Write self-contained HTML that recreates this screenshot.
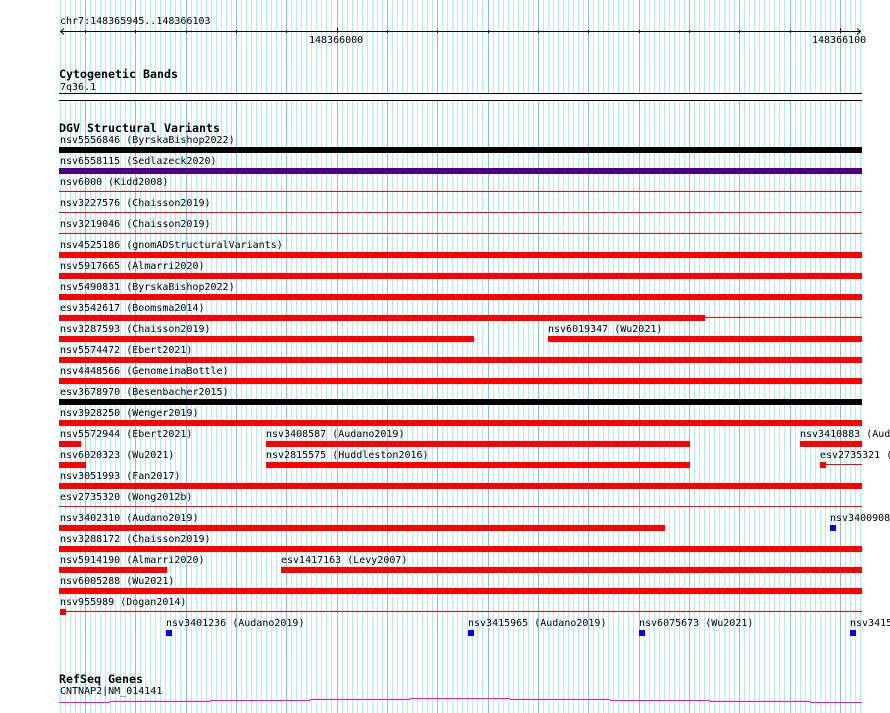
<!DOCTYPE html>
<html><head><meta charset="utf-8"><style>
html,body{margin:0;padding:0;background:#fff;width:890px;height:713px;overflow:hidden}
body{position:relative}
svg{position:absolute;left:0;top:0}
.t{position:absolute;font:10px/12px "DejaVu Sans Mono","Liberation Mono",monospace;color:#000;white-space:pre;margin-top:1px}
.b{position:absolute;font:bold 11.63px/14px "DejaVu Sans Mono","Liberation Mono",monospace;color:#000;white-space:pre}
.c{overflow:hidden}
</style></head><body>
<svg width="890" height="713" shape-rendering="crispEdges">
<g transform="translate(.5 0)" fill="none">
<path stroke="#aeeeee" d="M60 0V713M65 0V713M70 0V713M75 0V713M80 0V713M90 0V713M95 0V713M100 0V713M105 0V713M110 0V713M115 0V713M120 0V713M125 0V713M130 0V713M140 0V713M145 0V713M150 0V713M155 0V713M160 0V713M165 0V713M170 0V713M175 0V713M180 0V713M191 0V713M196 0V713M201 0V713M206 0V713M211 0V713M216 0V713M221 0V713M226 0V713M231 0V713M241 0V713M246 0V713M251 0V713M256 0V713M261 0V713M266 0V713M271 0V713M276 0V713M281 0V713M291 0V713M296 0V713M301 0V713M306 0V713M311 0V713M316 0V713M321 0V713M326 0V713M331 0V713M342 0V713M347 0V713M352 0V713M357 0V713M362 0V713M367 0V713M372 0V713M377 0V713M382 0V713M392 0V713M397 0V713M402 0V713M407 0V713M412 0V713M417 0V713M422 0V713M427 0V713M432 0V713M442 0V713M447 0V713M452 0V713M457 0V713M462 0V713M467 0V713M472 0V713M477 0V713M482 0V713M493 0V713M498 0V713M503 0V713M508 0V713M513 0V713M518 0V713M523 0V713M528 0V713M533 0V713M543 0V713M548 0V713M553 0V713M558 0V713M563 0V713M568 0V713M573 0V713M578 0V713M583 0V713M593 0V713M598 0V713M603 0V713M608 0V713M613 0V713M618 0V713M623 0V713M628 0V713M633 0V713M644 0V713M649 0V713M654 0V713M659 0V713M664 0V713M669 0V713M674 0V713M679 0V713M684 0V713M694 0V713M699 0V713M704 0V713M709 0V713M714 0V713M719 0V713M724 0V713M729 0V713M734 0V713M744 0V713M749 0V713M754 0V713M759 0V713M764 0V713M769 0V713M774 0V713M779 0V713M784 0V713M795 0V713M800 0V713M805 0V713M810 0V713M815 0V713M820 0V713M825 0V713M830 0V713M835 0V713M845 0V713M850 0V713M855 0V713M860 0V713"/>
<path stroke="#82c0ee" d="M85 0V713M135 0V713M186 0V713M236 0V713M286 0V713M337 0V713M387 0V713M437 0V713M488 0V713M538 0V713M588 0V713M639 0V713M689 0V713M739 0V713M790 0V713M840 0V713"/>
</g>
<!-- ruler -->
<g fill="#000">
<rect x="60" y="31" width="801" height="1"/>
<rect x="85" y="30" width="1" height="3"/><rect x="135" y="30" width="1" height="3"/><rect x="186" y="30" width="1" height="3"/><rect x="236" y="30" width="1" height="3"/><rect x="286" y="30" width="1" height="3"/><rect x="387" y="30" width="1" height="3"/><rect x="437" y="30" width="1" height="3"/><rect x="488" y="30" width="1" height="3"/><rect x="538" y="30" width="1" height="3"/><rect x="588" y="30" width="1" height="3"/><rect x="639" y="30" width="1" height="3"/><rect x="689" y="30" width="1" height="3"/><rect x="739" y="30" width="1" height="3"/><rect x="790" y="30" width="1" height="3"/>
<rect x="337" y="28" width="1" height="5"/><rect x="840" y="28" width="1" height="5"/>
</g>
<path d="M64 28.5L60.5 31.5L64 34.5M857 28.5L860.5 31.5L857 34.5" fill="none" stroke="#000" shape-rendering="auto"/>
<!-- cytoband -->
<rect x="59" y="94" width="803" height="6" fill="#fff"/>
<rect x="59" y="93" width="803" height="1" fill="#000"/>
<rect x="59" y="100" width="803" height="1" fill="#000"/>
<!-- bars -->
<g fill="#f00">
<rect x="59" y="191" width="803" height="1"/>
<rect x="59" y="212" width="803" height="1"/>
<rect x="59" y="252" width="803" height="6"/>
<rect x="59" y="273" width="803" height="6"/>
<rect x="59" y="294" width="803" height="6"/>
<rect x="59" y="315" width="646" height="6"/><rect x="705" y="317" width="157" height="1"/>
<rect x="59" y="336" width="415" height="6"/><rect x="548" y="336" width="314" height="6"/>
<rect x="59" y="357" width="803" height="6"/>
<rect x="59" y="378" width="803" height="6"/>
<rect x="59" y="420" width="803" height="6"/>
<rect x="59" y="441" width="22" height="6"/><rect x="266" y="441" width="424" height="6"/><rect x="800" y="441" width="62" height="6"/>
<rect x="59" y="462" width="27" height="6"/><rect x="266" y="462" width="424" height="6"/><rect x="820" y="462" width="6" height="6"/><rect x="826" y="464" width="36" height="1"/>
<rect x="59" y="483" width="803" height="6"/>
<rect x="59" y="506" width="803" height="1"/>
<rect x="59" y="525" width="606" height="6"/>
<rect x="59" y="546" width="803" height="6"/>
<rect x="59" y="567" width="108" height="6"/><rect x="281" y="567" width="581" height="6"/>
<rect x="59" y="588" width="803" height="6"/>
<rect x="60" y="609" width="6" height="6"/><rect x="66" y="611" width="796" height="1"/>
</g>
<rect x="59" y="233" width="803" height="1" fill="#f00"/>
<rect x="59" y="147" width="803" height="6" fill="#000"/>
<rect x="59" y="168" width="803" height="6" fill="#4b0082"/>
<rect x="59" y="399" width="803" height="6" fill="#000"/>
<g fill="#00f">
<rect x="830" y="525" width="6" height="6"/>
<rect x="166" y="630" width="6" height="6"/>
<rect x="468" y="630" width="6" height="6"/>
<rect x="639" y="630" width="6" height="6"/>
<rect x="850" y="630" width="6" height="6"/>
</g>
<g fill="#f0f">
<rect x="59" y="702" width="51" height="1"/>
<rect x="110" y="701" width="100" height="1"/>
<rect x="210" y="700" width="100" height="1"/>
<rect x="310" y="699" width="100" height="1"/>
<rect x="410" y="698" width="100" height="1"/>
<rect x="510" y="699" width="100" height="1"/>
<rect x="610" y="700" width="100" height="1"/>
<rect x="710" y="701" width="100" height="1"/>
<rect x="810" y="702" width="52" height="1"/>
</g>
</svg>
<div class="t" style="left:60px;top:15px">chr7:148365945..148366103</div>
<div class="t" style="left:309px;top:34px">148366000</div>
<div class="t" style="left:812px;top:34px">148366100</div>
<div class="b" style="left:59px;top:67px">Cytogenetic Bands</div>
<div class="t" style="left:60px;top:81px">7q36.1</div>
<div class="b" style="left:59px;top:121px">DGV Structural Variants</div>
<div class="t" style="left:60px;top:134px">nsv5556846 (ByrskaBishop2022)</div>
<div class="t" style="left:60px;top:155px">nsv6558115 (Sedlazeck2020)</div>
<div class="t" style="left:60px;top:176px">nsv6000 (Kidd2008)</div>
<div class="t" style="left:60px;top:197px">nsv3227576 (Chaisson2019)</div>
<div class="t" style="left:60px;top:218px">nsv3219046 (Chaisson2019)</div>
<div class="t" style="left:60px;top:239px">nsv4525186 (gnomADStructuralVariants)</div>
<div class="t" style="left:60px;top:260px">nsv5917665 (Almarri2020)</div>
<div class="t" style="left:60px;top:281px">nsv5490831 (ByrskaBishop2022)</div>
<div class="t" style="left:60px;top:302px">esv3542617 (Boomsma2014)</div>
<div class="t" style="left:60px;top:323px">nsv3287593 (Chaisson2019)</div>
<div class="t" style="left:548px;top:323px">nsv6019347 (Wu2021)</div>
<div class="t" style="left:60px;top:344px">nsv5574472 (Ebert2021)</div>
<div class="t" style="left:60px;top:365px">nsv4448566 (GenomeinaBottle)</div>
<div class="t" style="left:60px;top:386px">esv3678970 (Besenbacher2015)</div>
<div class="t" style="left:60px;top:407px">nsv3928250 (Wenger2019)</div>
<div class="t" style="left:60px;top:428px">nsv5572944 (Ebert2021)</div>
<div class="t" style="left:266px;top:428px">nsv3408587 (Audano2019)</div>
<div class="t c" style="left:800px;top:428px;width:90px">nsv3410883 (Aud</div>
<div class="t" style="left:60px;top:449px">nsv6020323 (Wu2021)</div>
<div class="t" style="left:266px;top:449px">nsv2815575 (Huddleston2016)</div>
<div class="t c" style="left:820px;top:449px;width:70px">esv2735321 (</div>
<div class="t" style="left:60px;top:470px">nsv3051993 (Fan2017)</div>
<div class="t" style="left:60px;top:491px">esv2735320 (Wong2012b)</div>
<div class="t" style="left:60px;top:512px">nsv3402310 (Audano2019)</div>
<div class="t c" style="left:830px;top:512px;width:60px">nsv3400908</div>
<div class="t" style="left:60px;top:533px">nsv3288172 (Chaisson2019)</div>
<div class="t" style="left:60px;top:554px">nsv5914190 (Almarri2020)</div>
<div class="t" style="left:281px;top:554px">esv1417163 (Levy2007)</div>
<div class="t" style="left:60px;top:575px">nsv6005288 (Wu2021)</div>
<div class="t" style="left:60px;top:596px">nsv955989 (Dogan2014)</div>
<div class="t" style="left:166px;top:617px">nsv3401236 (Audano2019)</div>
<div class="t" style="left:468px;top:617px">nsv3415965 (Audano2019)</div>
<div class="t" style="left:639px;top:617px">nsv6075673 (Wu2021)</div>
<div class="t c" style="left:850px;top:617px;width:40px">nsv3415</div>
<div class="b" style="left:59px;top:672px">RefSeq Genes</div>
<div class="t" style="left:60px;top:685px">CNTNAP2|NM_014141</div>
</body></html>
